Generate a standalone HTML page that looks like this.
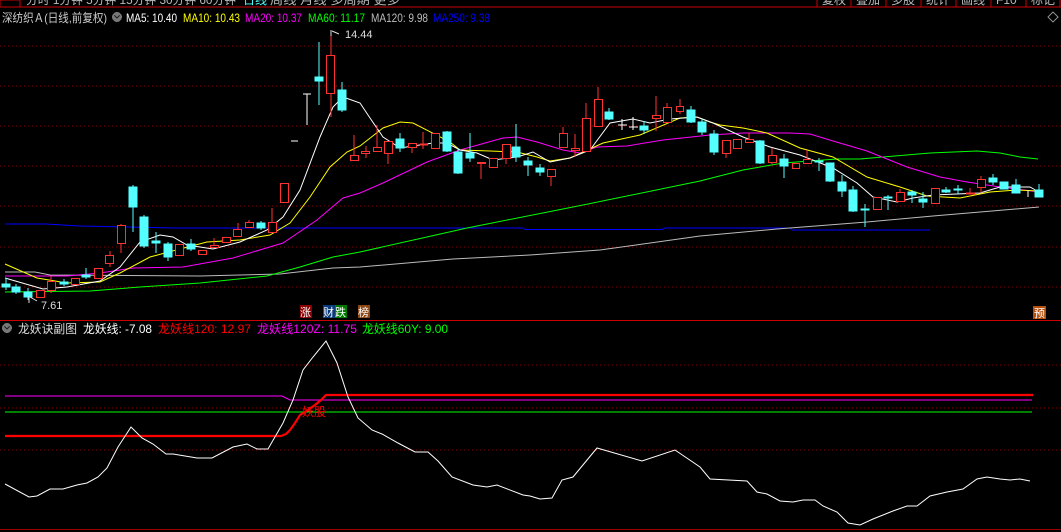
<!DOCTYPE html>
<html><head><meta charset="utf-8"><style>
body{margin:0;background:#000;width:1061px;height:532px;overflow:hidden;font-family:"Liberation Sans","Noto Sans CJK SC",sans-serif}
svg{position:absolute;left:0;top:0}
text{font-family:"Liberation Sans","Noto Sans CJK SC",sans-serif}
</style></head><body>
<svg width="1061" height="532" viewBox="0 0 1061 532" xmlns="http://www.w3.org/2000/svg" shape-rendering="crispEdges">
<!-- top bar -->
<g fill="#bbb" font-size="12">
<text x="26" y="4" textLength="210" lengthAdjust="spacingAndGlyphs">分时 1分钟 5分钟 15分钟 30分钟 60分钟</text>
<text x="243" y="4" fill="#5ff">日线</text>
<text x="270" y="4" textLength="130" lengthAdjust="spacingAndGlyphs">周线 月线 多周期 更多</text>
<text x="822" y="4">复权</text><text x="856" y="4">叠加</text><text x="891" y="4">多股</text><text x="926" y="4">统计</text><text x="961" y="4">画线</text><text x="996" y="4">F10</text><text x="1031" y="4">标记</text>
</g>
<rect x="0" y="0" width="20" height="7" fill="none" stroke="#c00"/>
<line x1="0" y1="7" x2="1061" y2="7" stroke="#c00"/>
<g stroke="#c00"><line x1="817" y1="0" x2="817" y2="7"/><line x1="851" y1="0" x2="851" y2="7"/><line x1="886" y1="0" x2="886" y2="7"/><line x1="921" y1="0" x2="921" y2="7"/><line x1="956" y1="0" x2="956" y2="7"/><line x1="991" y1="0" x2="991" y2="7"/><line x1="1026" y1="0" x2="1026" y2="7"/><line x1="1060" y1="0" x2="1060" y2="7"/></g>
<!-- header -->
<g font-size="12">
<text x="2" y="22" fill="#ccc" textLength="105" lengthAdjust="spacingAndGlyphs">深纺织Ａ(日线,前复权)</text>
<circle cx="117" cy="17" r="5" fill="#777"/><path d="M114.5 15.5 L117 18 L119.5 15.5" stroke="#222" fill="none" stroke-width="1.3"/>
<text x="126" y="22" fill="#fff" textLength="51" lengthAdjust="spacingAndGlyphs">MA5: 10.40</text>
<text x="183" y="22" fill="#ff0" textLength="57" lengthAdjust="spacingAndGlyphs">MA10: 10.43</text>
<text x="245" y="22" fill="#f0f" textLength="57" lengthAdjust="spacingAndGlyphs">MA20: 10.37</text>
<text x="308" y="22" fill="#0f0" textLength="57" lengthAdjust="spacingAndGlyphs">MA60: 11.17</text>
<text x="371" y="22" fill="#bbb" textLength="57" lengthAdjust="spacingAndGlyphs">MA120: 9.98</text>
<text x="433" y="22" fill="#00f" textLength="57" lengthAdjust="spacingAndGlyphs">MA250: 9.38</text>
</g>
<path d="M1053 12 L1058 17 L1053 22 L1048 17 Z" fill="none" stroke="#888"/>
<!-- grid main -->
<g stroke="#800" stroke-dasharray="1,3">
<line x1="0" y1="46" x2="1061" y2="46"/><line x1="0" y1="86" x2="1061" y2="86"/><line x1="0" y1="126" x2="1061" y2="126"/><line x1="0" y1="166" x2="1061" y2="166"/><line x1="0" y1="206" x2="1061" y2="206"/><line x1="0" y1="247" x2="1061" y2="247"/><line x1="0" y1="287" x2="1061" y2="287"/>
<line x1="0" y1="365" x2="1061" y2="365"/><line x1="0" y1="408" x2="1061" y2="408"/><line x1="0" y1="450" x2="1061" y2="450"/>
</g>
<!-- MAs -->
<g fill="none" stroke-width="1" shape-rendering="auto">
<polyline stroke="#00f" points="5,224 45,224 80,226 175,228 523,228 525,229.5 662,229.5 665,228 790,228 792,230 930,230"/>
<polyline stroke="#bbb" points="5,272 35,272 50,275 200,276 280,274 333,268 360,267 453,259 530,255 600,250 700,236 777,229 867,222 933,216 1039,207"/>
<polyline stroke="#0f0" points="5,292 90,291 140,287 200,283 267,276 300,267 333,257 360,252 467,228 583,205 700,181 743,170 783,163 837,159 860,159 930,153 977,151 1000,153 1020,157 1038,159"/>
<polyline stroke="#f0f" points="5,276 67,276 100,273 133,268 183,267 233,258 283,243 317,220 343,198 360,193 383,183 427,162 460,150 503,138 517,137 537,142 563,150 580,153 597,147 627,146 663,140 710,135 743,133 790,133 810,134 833,141 867,151 907,167 940,177 967,182 1000,187 1039,192"/>
<polyline stroke="#ff0" points="5,264 37,278 67,283 100,282 120,273 150,257 180,249 207,242 240,240 270,235 290,223 310,197 330,167 347,152 360,146 383,128 400,122 413,123 450,142 460,150 490,151 517,152 537,157 550,161 570,158 603,143 640,135 680,118 697,117 710,122 720,125 743,128 767,133 800,148 833,157 867,177 900,187 927,196 960,198 990,192 1017,190 1039,191"/>
<polyline stroke="#fff" points="5,278 43,289 67,287 100,281 120,267 140,242 160,235 173,237 187,245 213,249 240,242 267,230 283,217 300,190 320,137 333,107 343,97 360,103 370,118 383,137 400,148 433,143 447,143 460,150 477,153 493,160 517,157 533,152 550,162 570,158 590,150 610,123 633,119 650,123 670,119 697,117 713,123 743,137 770,147 800,155 833,168 857,183 873,197 897,202 913,198 933,195 980,193 1000,187 1030,187 1039,192"/>
</g>
<!-- candles: cyan -->
<g fill="#54ffff" stroke="#54ffff">
<path d="M6 278V290M16 284V294M28 288V300M64 279V286M86 268V279M133 185V232M144 215V248M156 232V253M168 242V261M191 239V251M261 221V230M319 42V105M342 82V112M400 133V152M447 131V152M458 148V174M470 133V162M516 124V162M528 157V176M540 164V176M609 108V120M644 121V134M691 106V123M702 119V135M714 130V155M760 140V164M784 154V178M819 158V171M830 163V182M842 175V197M853 186V212M865 204V227M888 195V210M912 190V203M923 192V208M946 187V193M958 185V194M993 174V185M1016 179V193M1039 184V197" fill="none"/>
<rect x="2" y="284" width="8" height="3"/><rect x="12" y="287" width="8" height="5"/><rect x="24" y="292" width="8" height="5"/><rect x="60" y="282" width="8" height="2"/><rect x="82" y="275" width="8" height="2"/>
<rect x="129" y="187" width="8" height="20"/><rect x="140" y="217" width="8" height="29"/><rect x="152" y="241" width="8" height="2"/><rect x="164" y="244" width="8" height="13"/><rect x="187" y="244" width="8" height="5"/><rect x="257" y="223" width="8" height="5"/>
<rect x="315" y="77" width="8" height="4"/><rect x="338" y="90" width="8" height="20"/><rect x="396" y="139" width="8" height="9"/><rect x="443" y="132" width="8" height="19"/><rect x="454" y="152" width="8" height="21"/><rect x="466" y="153" width="8" height="5"/><rect x="512" y="147" width="8" height="10"/><rect x="524" y="161" width="8" height="4"/><rect x="536" y="168" width="8" height="4"/>
<rect x="605" y="112" width="8" height="7"/><rect x="640" y="126" width="8" height="4"/><rect x="687" y="110" width="8" height="12"/><rect x="698" y="122" width="8" height="10"/><rect x="710" y="134" width="8" height="18"/><rect x="756" y="141" width="8" height="22"/><rect x="780" y="159" width="8" height="7"/>
<rect x="815" y="161" width="8" height="1"/><rect x="826" y="163" width="8" height="18"/><rect x="838" y="182" width="8" height="9"/><rect x="849" y="190" width="8" height="21"/><rect x="861" y="209" width="8" height="1"/><rect x="884" y="197" width="8" height="1"/><rect x="908" y="192" width="8" height="3"/><rect x="919" y="199" width="8" height="3"/><rect x="942" y="190" width="8" height="2"/><rect x="954" y="189" width="8" height="1"/><rect x="989" y="178" width="8" height="4"/><rect x="1000" y="182" width="8" height="7"/><rect x="1012" y="185" width="8" height="8"/><rect x="1035" y="190" width="8" height="7"/>
</g>
<!-- candles: red -->
<g stroke="#ff3232" fill="#000">
<path d="M51 276V293M121 224V253M110 251V267M214 238V247M238 223V236M249 220V227M272 208V232M331 30V117M354 135V161M366 146V158M377 125V151M388 141V164M412 143V153M423 132V149M435 133V148M481 162V179M493 158V167M506 144V164M551 169V186M563 127V147M575 134V157M586 103V151M598 87V126M656 96V131M667 103V122M680 99V114M726 140V158M737 139V148M749 133V143M772 148V164M807 150V163M877 197V209M900 189V201M935 188V204M970 188V194M981 176V193" fill="none"/>
<rect x="36.5" y="290.5" width="8" height="7"/><rect x="47.5" y="281.5" width="8" height="9"/><rect x="71.5" y="278.5" width="8" height="6"/><rect x="94.5" y="268.5" width="8" height="10"/><rect x="105.5" y="255.5" width="8" height="8"/><rect x="117.5" y="225.5" width="8" height="18"/>
<rect x="175.5" y="244.5" width="8" height="11"/><rect x="198.5" y="250.5" width="8" height="4"/><rect x="210.5" y="245.5" width="8" height="2"/><rect x="222.5" y="237.5" width="8" height="5"/><rect x="233.5" y="229.5" width="8" height="7"/><rect x="245.5" y="222.5" width="8" height="5"/><rect x="268.5" y="222.5" width="8" height="10"/><rect x="280.5" y="183.5" width="8" height="19"/>
<rect x="326.5" y="55.5" width="8" height="38"/><rect x="350.5" y="155.5" width="8" height="5"/><rect x="361.5" y="151.5" width="8" height="2"/><rect x="373.5" y="147.5" width="8" height="4"/><rect x="384.5" y="141.5" width="8" height="12"/><rect x="408.5" y="143.5" width="8" height="4"/><rect x="420.5" y="144" width="7" height="1"/><rect x="431.5" y="133.5" width="8" height="15"/>
<rect x="477.5" y="162.5" width="8" height="1"/><rect x="489.5" y="158.5" width="8" height="9"/><rect x="502.5" y="144.5" width="8" height="14"/><rect x="547.5" y="169.5" width="8" height="7"/><rect x="559.5" y="133.5" width="8" height="14"/><rect x="571.5" y="148.5" width="8" height="2"/><rect x="582.5" y="118.5" width="8" height="33"/><rect x="594.5" y="99.5" width="8" height="27"/>
<rect x="652.5" y="115.5" width="8" height="3"/><rect x="663.5" y="107.5" width="8" height="15"/><rect x="676.5" y="106.5" width="7" height="5"/><rect x="722.5" y="140.5" width="8" height="13"/><rect x="733.5" y="139.5" width="8" height="9"/><rect x="745.5" y="139.5" width="8" height="3"/><rect x="768.5" y="155.5" width="8" height="7"/><rect x="792.5" y="163.5" width="7" height="5"/><rect x="803.5" y="159.5" width="8" height="4"/>
<rect x="873.5" y="197.5" width="8" height="12"/><rect x="896.5" y="192.5" width="8" height="9"/><rect x="931.5" y="188.5" width="8" height="15"/><rect x="966.5" y="193" width="8" height="1"/><rect x="977.5" y="179.5" width="8" height="8"/>
</g>
<!-- white crosses -->
<g stroke="#fff" fill="none">
<path d="M291 141H298M303 94H311M307 94V125M618 125H627M622 119V130M629 127H638M633 117V130M1028 190V197"/>
</g>
<!-- labels -->
<path d="M331 30V36M332 31L339 34" stroke="#ddd" fill="none" shape-rendering="auto"/>
<text x="345" y="38" fill="#ddd" font-size="11">14.44</text>
<path d="M29 296V303M30 297L37 301" stroke="#ddd" fill="none" shape-rendering="auto"/>
<text x="41" y="309" fill="#ddd" font-size="11">7.61</text>
<g font-size="11" fill="#fff">
<rect x="300" y="305" width="12" height="13" fill="#8b0000"/><text x="300" y="316">涨</text>
<rect x="323" y="305" width="12" height="13" fill="#0a3a7a"/><text x="323" y="316">财</text>
<rect x="335" y="305" width="12" height="13" fill="#007700"/><text x="335" y="316">跌</text>
<rect x="358" y="305" width="12" height="13" fill="#8b4513"/><text x="358" y="316">榜</text>
<rect x="1033" y="306" width="13" height="13" fill="#b5500f"/><text x="1034" y="317">预</text>
</g>
<line x1="0" y1="320.5" x2="1061" y2="320.5" stroke="#c00"/>
<!-- sub header -->
<g font-size="12">
<circle cx="7" cy="328" r="5" fill="#777"/><path d="M4.5 326.5 L7 329 L9.5 326.5" stroke="#222" fill="none" stroke-width="1.3"/>
<text x="18" y="333" fill="#ddd" textLength="59" lengthAdjust="spacingAndGlyphs">龙妖诀副图</text>
<text x="83" y="333" fill="#fff" textLength="69" lengthAdjust="spacingAndGlyphs">龙妖线: -7.08</text>
<text x="158" y="333" fill="#f00" textLength="93" lengthAdjust="spacingAndGlyphs">龙妖线120: 12.97</text>
<text x="257" y="333" fill="#f0f" textLength="100" lengthAdjust="spacingAndGlyphs">龙妖线120Z: 11.75</text>
<text x="362" y="333" fill="#0f0" textLength="86" lengthAdjust="spacingAndGlyphs">龙妖线60Y: 9.00</text>
</g>
<g fill="none" shape-rendering="auto">
<polyline stroke="#f0f" points="5,396 282,396 290,400 1032,400"/>
<line x1="5" y1="412" x2="1032" y2="412" stroke="#0f0"/>
<polyline stroke="#f00" stroke-width="2.2" points="5,436 281,436 286,434 290,430 295,423 300,415 308,410 315,405 321,400 326,395 1033,395"/>
<polyline stroke="#fff" points="5,484 29,497 37,496 50,489 63,489 77,485 87,483 98,477 107,468 118,447 131,427 142,438 153,444 166,454 173,454 197,458 212,458 233,447 247,444 257,449 268,449 283,423 293,400 303,370 313,357 326,341 337,363 348,397 358,418 372,430 382,434 398,443 415,452 428,452 438,461 452,477 473,485 487,487 497,485 523,495 530,496 540,499 552,498 562,480 573,477 597,448 642,461 675,450 700,467 710,479 747,481 757,492 767,494 780,501 793,502 803,500 815,500 823,506 837,512 848,523 860,525 873,519 893,511 907,506 917,506 930,496 947,492 963,489 977,479 987,477 1000,479 1010,480 1020,479 1030,481"/>
</g>
<text x="302" y="416" fill="#f00" font-size="12">妖股</text>
<line x1="0" y1="529.5" x2="1061" y2="529.5" stroke="#900"/>
</svg>
</body></html>
